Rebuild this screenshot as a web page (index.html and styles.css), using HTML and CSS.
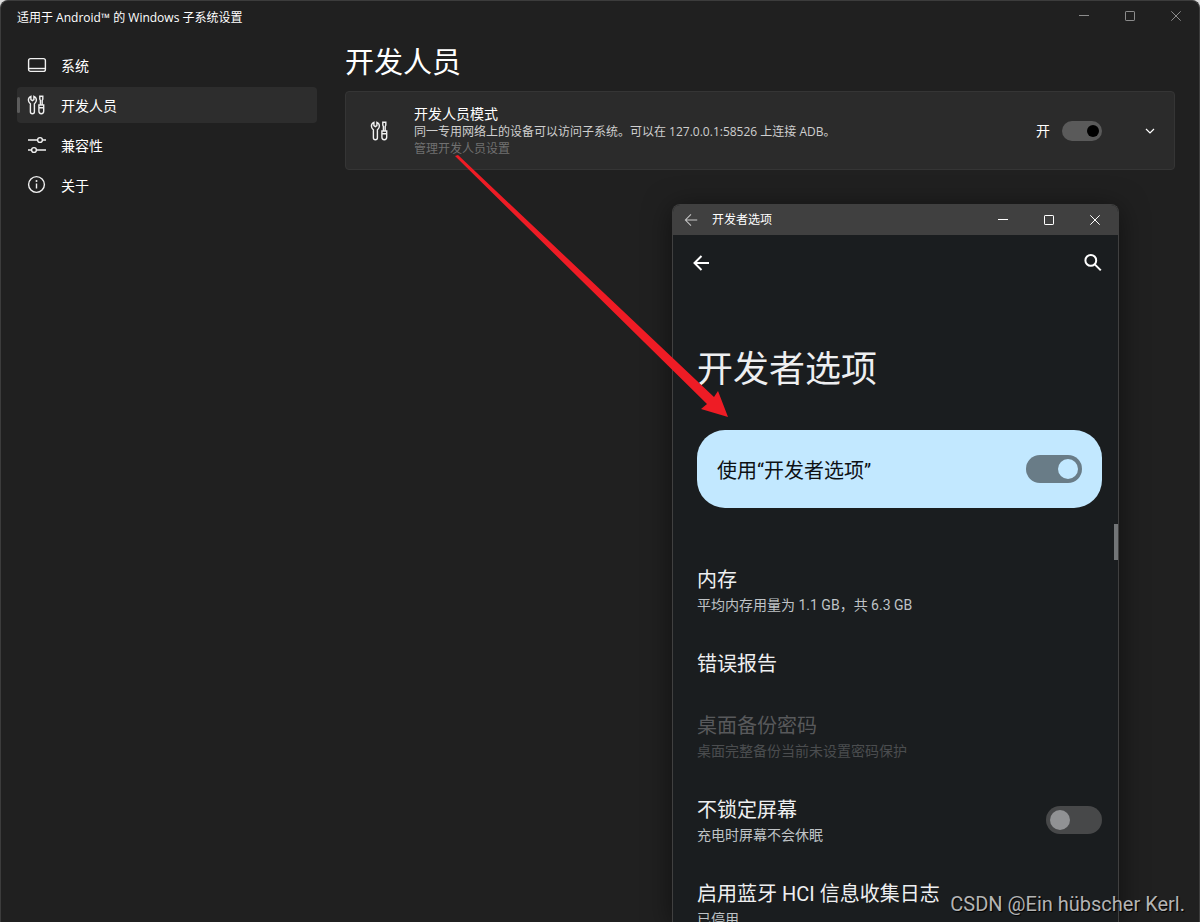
FILE: index.html
```html
<!DOCTYPE html>
<html lang="zh-CN">
<head>
<meta charset="utf-8">
<title>适用于 Android™ 的 Windows 子系统设置</title>
<link rel="stylesheet" href="styles.css">
</head>
<body>
<svg class="symbols" aria-hidden="true">
  <symbol id="tools" viewBox="0 0 20 20">
    <path d="M3.900 1.300C2.400 2 1.400 3.400 1.400 5.100C1.400 6.700 2.200 8 3.400 8.800V16.700A2 2 0 0 0 7.400 16.700V8.800C8.600 8 9.400 6.700 9.400 5.100C9.400 3.400 8.400 2 6.900 1.300V4.700L5.400 5.700L3.900 4.700Z"/>
    <path d="M12.800 1.200H15.800V4.200L15.200 5.500V10H13.400V5.500L12.800 4.200ZM11.900 10H16.700V16.300A2.400 2.400 0 0 1 11.900 16.300ZM11.900 12.700H16.700"/>
  </symbol>
  <symbol id="back" viewBox="0 0 18 18"><path d="M17 9H2M9 1.800L1.800 9L9 16.200"/></symbol>
  <symbol id="minimize" viewBox="0 0 10 10"><path d="M0 4.500H10"/></symbol>
  <symbol id="maximize" viewBox="0 0 10 10"><rect x=".5" y=".5" width="9" height="9" rx=".6"/></symbol>
  <symbol id="close" viewBox="0 0 10 10"><path d="M.3.3L9.700 9.700M9.700.3L.3 9.700"/></symbol>
</svg>
<div class="settings">
  <header class="titlebar">
    <span class="titlebar-name">适用于 Android™ 的 Windows 子系统设置</span>
    <div class="captions">
      <button type="button" aria-label="最小化"><svg><use href="#minimize"/></svg></button>
      <button type="button" aria-label="最大化"><svg><use href="#maximize"/></svg></button>
      <button type="button" aria-label="关闭"><svg><use href="#close"/></svg></button>
    </div>
  </header>
  <div class="layout">
    <nav class="nav">
      <a class="nav-item" href="#system"><svg class="icon" viewBox="0 0 20 20"><rect x="1.600" y="3.600" width="16.800" height="12.800" rx="2"/><path d="M2 13.500H18"/></svg><span>系统</span></a>
      <a class="nav-item is-active" href="#developer" aria-current="page"><svg class="icon"><use href="#tools"/></svg><span>开发人员</span></a>
      <a class="nav-item" href="#compat"><svg class="icon" viewBox="0 0 20 20"><path d="M1 5H10.600M15.400 5H19M1 15H4.600M9.400 15H19"/><circle cx="13" cy="5" r="2.400"/><circle cx="7" cy="15" r="2.400"/></svg><span>兼容性</span></a>
      <a class="nav-item" href="#about"><svg class="icon" viewBox="0 0 20 20"><circle cx="9.500" cy="9.500" r="7.900"/><path d="M9.500 8.500V13.500"/><circle class="dot" cx="9.500" cy="6" r="1"/></svg><span>关于</span></a>
    </nav>
    <main class="content">
      <h1>开发人员</h1>
      <section class="card">
        <svg class="icon"><use href="#tools"/></svg>
        <div class="card-text">
          <h2><label for="dev-mode">开发人员模式</label></h2>
          <p>同一专用网络上的设备可以访问子系统。可以在 127.0.0.1:58526 上连接 ADB。</p>
          <a href="#manage">管理开发人员设置</a>
        </div>
        <span class="state">开</span>
        <input class="toggle" id="dev-mode" type="checkbox" role="switch" checked>
        <button class="expand" type="button" aria-label="展开"><svg viewBox="0 0 10 6"><path d="M1 1L5 5L9 1"/></svg></button>
      </section>
    </main>
  </div>
</div>

<div class="phone">
  <header class="phone-titlebar">
    <button class="phone-back" type="button" aria-label="后退"><svg><use href="#back"/></svg></button>
    <span class="phone-name">开发者选项</span>
    <div class="captions">
      <button type="button" aria-label="最小化"><svg><use href="#minimize"/></svg></button>
      <button type="button" aria-label="最大化"><svg><use href="#maximize"/></svg></button>
      <button type="button" aria-label="关闭"><svg><use href="#close"/></svg></button>
    </div>
  </header>
  <div class="appbar">
    <button type="button" aria-label="返回"><svg viewBox="0 0 18 18"><path d="M17 9H2.500M9.500 2L2.500 9L9.500 16"/></svg></button>
    <button type="button" aria-label="搜索"><svg viewBox="0 0 18 18"><circle cx="6.800" cy="6.400" r="5.400"/><path d="M10.800 10.400L16.800 16.400"/></svg></button>
  </div>
  <div class="phone-content">
    <h2 class="phone-heading">开发者选项</h2>
    <div class="master"><label for="use-dev">使用“开发者选项”</label><input class="switch" id="use-dev" type="checkbox" role="switch" checked></div>
    <ul class="rows">
      <li class="row"><div><h3>内存</h3><p>平均内存用量为 1.1 GB，共 6.3 GB</p></div></li>
      <li class="row"><div><h3>错误报告</h3></div></li>
      <li class="row is-disabled"><div><h3>桌面备份密码</h3><p>桌面完整备份当前未设置密码保护</p></div></li>
      <li class="row"><div><h3><label for="awake">不锁定屏幕</label></h3><p>充电时屏幕不会休眠</p></div><input class="switch" id="awake" type="checkbox" role="switch"></li>
      <li class="row"><div><h3>启用蓝牙 HCI 信息收集日志</h3><p>已停用</p></div></li>
    </ul>
  </div>
  <div class="scroll-thumb"></div>
</div>

<svg class="arrow" viewBox="0 0 273 262" aria-hidden="true"><path d="M0 1L3 0L259 242L263 236L273 262L246 254L252 249Z"/></svg>
<div class="watermark">CSDN @Ein hübscher Kerl.</div>
</body>
</html>
```
FILE: styles.css
```css
* { box-sizing: border-box; }
html { height: 100%; background: #dcdcdc; }
body {
  position: relative;
  height: 100%;
  margin: 0;
  overflow: hidden;
  color: #fff;
  font-family: "Open Sans", "Noto Sans CJK SC", sans-serif;
  font-size: 14px;
  line-height: 20px;
}
h1, h2, h3, p, ul { margin: 0; padding: 0; font-weight: 400; }
a { color: inherit; text-decoration: none; }
button { padding: 0; border: 0; background: none; color: inherit; font: inherit; }
svg { display: block; fill: none; stroke: currentColor; }
.symbols { position: absolute; width: 0; height: 0; }
.icon { flex: none; width: 20px; height: 20px; color: #f0f0f0; stroke-width: 1.4; }
.dot { fill: currentColor; stroke: none; }

/* Settings window */
.settings {
  display: flex;
  flex-direction: column;
  height: 100%;
  border: 1px solid #3c3c3c;
  border-bottom: 0;
  border-radius: 8px 8px 0 0;
  background: #202020;
}
.titlebar { display: flex; justify-content: space-between; height: 46px; padding-left: 16px; }
.titlebar-name { padding-top: 7px; font-size: 12px; }
.captions { display: flex; }
.captions button { display: grid; place-items: center; width: 46px; height: 30px; }
.captions svg { width: 10px; height: 10px; }
.titlebar .captions { color: #8c8c8c; }

.layout { display: flex; flex: 1; min-height: 0; gap: 28px; padding: 0 24px 0 16px; }
.nav { display: flex; flex: none; flex-direction: column; gap: 4px; width: 300px; }
.nav-item {
  position: relative;
  display: flex;
  align-items: center;
  gap: 14px;
  height: 36px;
  padding-left: 10px;
  border-radius: 4px;
}
.nav-item span { padding-top: 2px; }
.nav-item.is-active { background: #2d2d2d; }
.nav-item.is-active::before {
  content: "";
  position: absolute;
  left: 0;
  top: 10px;
  width: 3px;
  height: 16px;
  border-radius: 2px;
  background: #5c5c5c;
}

.content { flex: 1; min-width: 0; }
h1 { height: 44px; font-size: 29px; line-height: 30px; }
.card {
  display: flex;
  align-items: center;
  min-height: 79px;
  padding-left: 24px;
  border: 1px solid #353535;
  border-radius: 4px;
  background: #2b2b2b;
}
.card-text { flex: 1; padding-left: 24px; }
.card-text h2 { font-size: 14px; line-height: 18px; }
.card-text p { color: #cfcfcf; font-size: 12px; line-height: 17px; }
.card-text a { display: block; color: #707070; font-size: 12px; line-height: 17px; }
.state { margin-right: 12px; }

.toggle, .switch { appearance: none; display: flex; align-items: center; flex: none; margin: 0; }
.toggle::before, .switch::before { content: ""; border-radius: 50%; }
.toggle { width: 40px; height: 20px; padding: 0 3px; border-radius: 10px; background: #5a5a5a; }
.toggle:checked { justify-content: flex-end; }
.toggle::before { width: 12px; height: 12px; background: #000; }
.expand { display: grid; place-items: center; width: 72px; height: 40px; padding-left: 24px; }
.expand svg { width: 10px; height: 6px; stroke-width: 1.2; }

/* Android window, floating over the settings window */
.phone {
  position: absolute;
  top: 204px;
  right: 81px;
  bottom: 0;
  display: flex;
  flex-direction: column;
  width: 447px;
  overflow: hidden;
  border: 1px solid #404040;
  border-bottom: 0;
  border-radius: 8px 8px 0 0;
  background: #1a1d1f;
  box-shadow: 0 4px 28px rgba(0, 0, 0, .5);
  font-family: Roboto, "Noto Sans CJK SC", sans-serif;
}
.phone-titlebar { display: flex; flex: none; align-items: center; height: 30px; background: #404040; font-size: 12px; }
.phone-titlebar .captions button { height: 28px; }
.phone-back { padding: 0 14px 0 11px; color: #c8c8c8; }
.phone-back svg { width: 14px; height: 14px; stroke-width: 1.3; }
.phone-name { flex: 1; }
.appbar { display: flex; flex: none; align-items: center; justify-content: space-between; height: 56px; padding: 0 16px 0 19px; }
.appbar svg { width: 18px; height: 18px; stroke-width: 2; }
.phone-content { flex: 1; min-height: 0; overflow: hidden; padding: 53px 16px 0 24px; }
.phone-heading { color: #eeeff1; font-size: 36px; line-height: 52px; }
.master {
  display: flex;
  align-items: center;
  justify-content: space-between;
  height: 78px;
  margin-top: 34px;
  padding: 0 20px;
  border-radius: 28px;
  background: #c2e8ff;
  color: #0e1114;
  font-size: 20px;
}
.master label { padding-top: 3px; }
.switch { width: 56px; height: 28px; padding: 0 4px; border-radius: 14px; background: #474849; }
.switch::before { width: 20px; height: 20px; background: #919294; }
.switch:checked { justify-content: flex-end; background: #697c87; }
.switch:checked::before { background: #c2e8ff; }
.rows { padding-top: 40px; list-style: none; }
.row { display: flex; align-items: center; justify-content: space-between; padding: 16px 0; }
.row h3 { padding-top: 2px; color: #eeeff1; font-size: 20px; line-height: 28px; }
.row p { padding-top: 1px; color: #bfc3c6; font-size: 14px; line-height: 21px; }
.row.is-disabled h3 { color: #58595b; }
.row.is-disabled p { color: #4b4d4f; }
.scroll-thumb { position: absolute; top: 319px; right: 0; width: 4px; height: 36px; background: #727577; }

/* Annotation and watermark */
.arrow { position: absolute; top: 155px; right: 472px; width: 273px; height: 262px; fill: #ee1c25; stroke: none; pointer-events: none; }
.watermark {
  position: absolute;
  right: 15px;
  bottom: 6px;
  color: #b4b4b4;
  font-family: Roboto, "Liberation Sans", sans-serif;
  font-size: 20px;
  line-height: 24px;
  text-shadow: 1px 1px 1px #000;
}
```
